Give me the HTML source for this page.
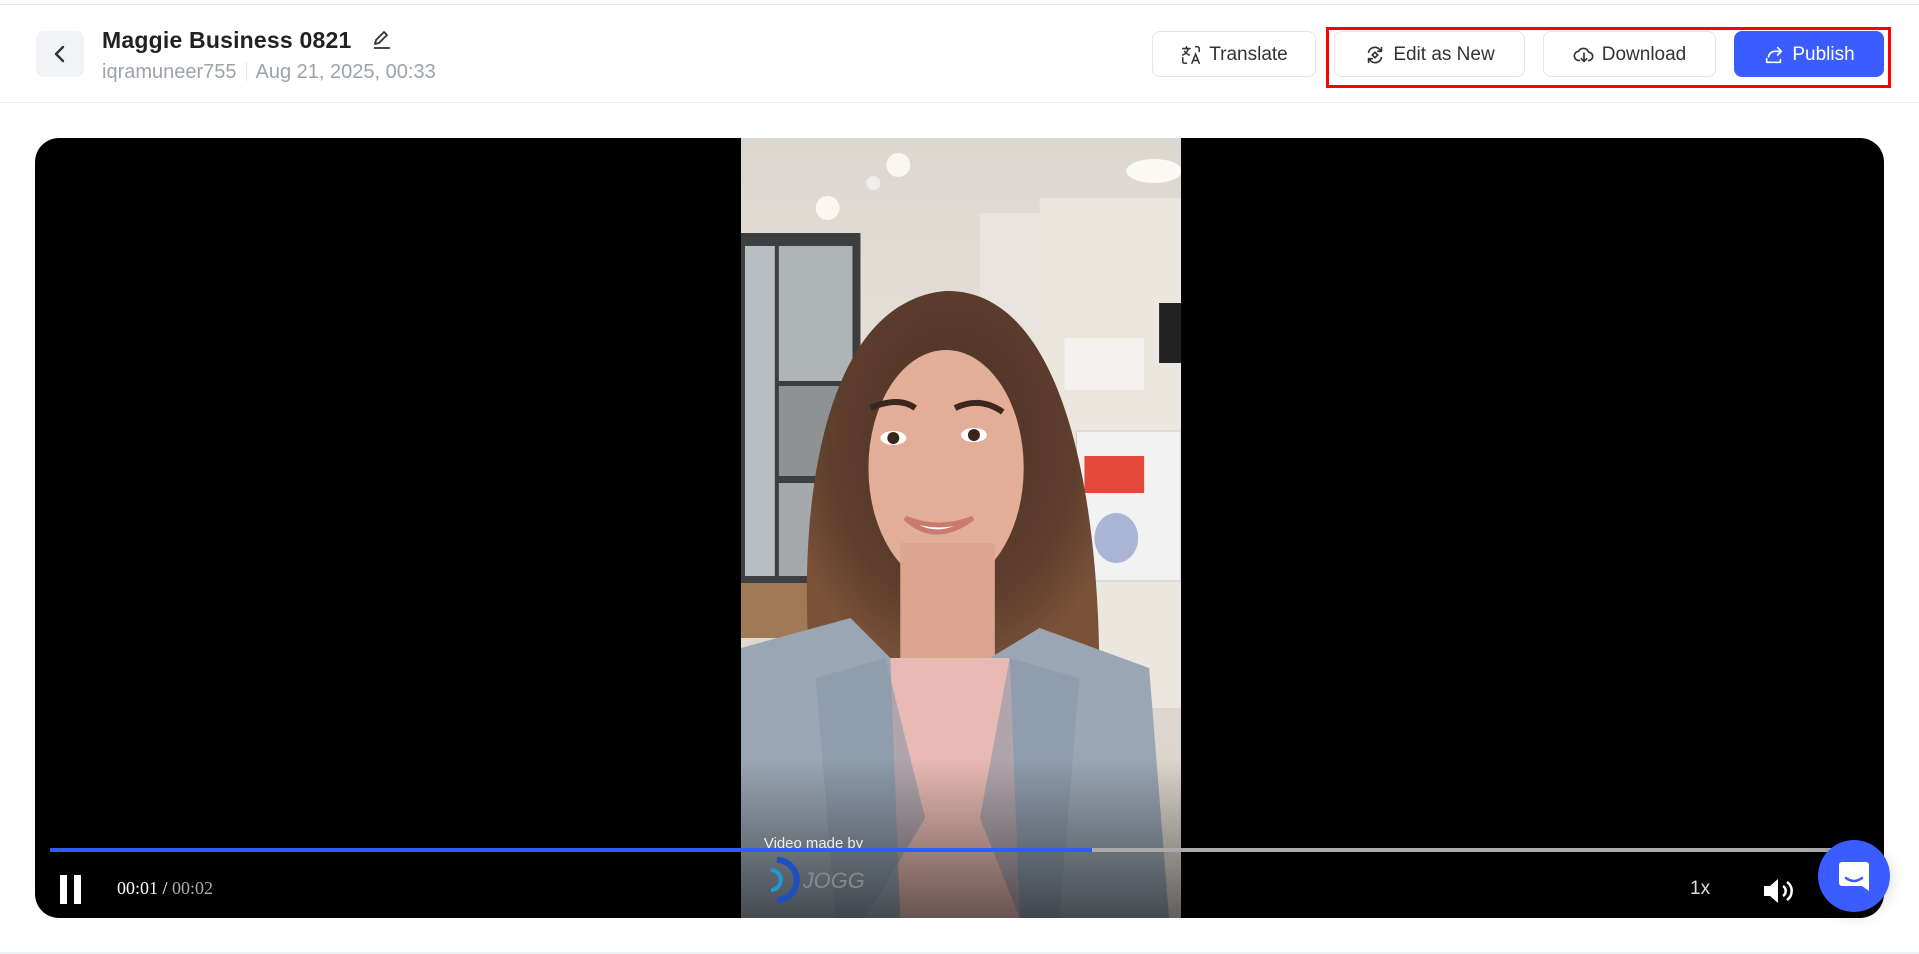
<!DOCTYPE html>
<html><head><meta charset="utf-8"><style>
*{box-sizing:border-box;margin:0;padding:0}
body{width:1919px;height:954px;background:#fff;font-family:"Liberation Sans",sans-serif;position:relative;overflow:hidden;color:#222}
.topline{position:absolute;left:0;top:4px;width:1919px;height:1px;background:#f6dde6}
.hline{position:absolute;left:0;top:102px;width:1919px;height:1px;background:#eceef0}
.back{position:absolute;left:36px;top:31px;width:48px;height:46px;background:#f1f3f6;border-radius:8px}
.title{position:absolute;left:102px;top:27px;font-size:23px;font-weight:bold;color:#222;letter-spacing:.2px}
.sub{position:absolute;left:102px;top:61px;font-size:20px;color:#9ea3a9}
.sub span{display:inline-block;width:1px;height:19px;background:#e2e4e7;vertical-align:-3px;margin:0 9px}
.btn{position:absolute;top:31px;height:46px;border:1px solid #e3e5e8;border-radius:8px;background:#fff;font-size:19px;color:#333;display:flex;align-items:center;justify-content:center;gap:7px;padding-top:2px}
.btn svg{width:22px;height:22px}
.pub{background:#3b5cff;color:#fff;border-color:#3b5cff}
.red{position:absolute;left:1326px;top:27px;width:565px;height:61px;border:3px solid #f00}
.video{position:absolute;left:35px;top:138px;width:1849px;height:780px;background:#000;border-radius:24px;overflow:hidden}
.bar{position:absolute;left:15px;top:710px;width:1782px;height:4px;background:#aaa}
.bar i{position:absolute;left:0;top:0;height:4px;width:1042px;background:#2f5bff}
.time{position:absolute;left:82px;top:740px;font-family:"Liberation Serif",serif;font-size:18px;color:#fff}
.time b{font-weight:normal;color:#aaa}
.chat{position:absolute;left:1818px;top:840px;width:72px;height:72px;border-radius:50%;background:#3b5cff;box-shadow:0 4px 16px rgba(0,0,0,.15)}
.bline{position:absolute;left:0;top:952px;width:1919px;height:2px;background:#eef0f3}
</style></head><body>
<div class="topline"></div>
<div class="back"><svg width="48" height="46" viewBox="0 0 48 46"><path d="M27 16l-7 7 7 7" fill="none" stroke="#333" stroke-width="2.4" stroke-linecap="round" stroke-linejoin="round"/></svg></div>
<div class="title">Maggie Business 0821 <svg width="24" height="24" viewBox="0 0 24 24" style="vertical-align:-3px;margin-left:12px"><path d="M5 17l1-4 8-8 3 3-8 8z M4 21h16" fill="none" stroke="#333" stroke-width="1.8" stroke-linejoin="round"/></svg></div>
<div class="sub">iqramuneer755<span></span>Aug 21, 2025, 00:33</div>

<div class="btn" style="left:1152px;width:164px"><svg viewBox="0 0 24 24" fill="none" stroke="#333" stroke-width="1.7" stroke-linecap="round"><path d="M3 5h8M7 3v2M9 5c-1 4-3 6-6 7M5 8c1 2 3 3 5 4M3 15v4a2 2 0 0 0 2 2h2M13 21l4-10 4 10M14.5 18h5M17 3h2a2 2 0 0 1 2 2v3"/></svg>Translate</div>
<div class="btn" style="left:1334px;width:191px"><svg viewBox="0 0 24 24" fill="none" stroke="#333" stroke-width="1.8" stroke-linecap="round"><path d="M5 9a7 7 0 0 1 12-3l2 2M19 15a7 7 0 0 1-12 3l-2-2M19 4v4h-4M5 20v-4h4"/><path d="M12 9l3 3-3 3-3-3z"/></svg>Edit as New</div>
<div class="btn" style="left:1543px;width:173px"><svg viewBox="0 0 24 24" fill="none" stroke="#333" stroke-width="1.8" stroke-linecap="round" stroke-linejoin="round"><path d="M7 18a5 5 0 0 1-1-10 6 6 0 0 1 11 1 4.5 4.5 0 0 1 0 9M12 10v9M9 16l3 3 3-3"/></svg>Download</div>
<div class="btn pub" style="left:1734px;width:150px"><svg viewBox="0 0 24 24" fill="none" stroke="#fff" stroke-width="1.8" stroke-linecap="round" stroke-linejoin="round"><path d="M4 20v-4M4 20h15v-3M6 14a7 7 0 0 1 7-6h6M16 4l4 4-4 4"/></svg>Publish</div>
<div class="red"></div>

<div class="video">
<svg style="position:absolute;left:706px;top:0" width="440" height="780" viewBox="0 0 442 780" preserveAspectRatio="none">
<defs>
<linearGradient id="bg" x1="0" y1="0" x2="0" y2="1"><stop offset="0" stop-color="#dcd7d0"/><stop offset=".25" stop-color="#e4ded6"/><stop offset="1" stop-color="#d8d2ca"/></linearGradient>
<linearGradient id="fade" x1="0" y1="0" x2="0" y2="1"><stop offset="0" stop-color="#000" stop-opacity="0"/><stop offset="1" stop-color="#000" stop-opacity=".55"/></linearGradient>
<radialGradient id="hair" cx=".5" cy=".35" r=".6"><stop offset="0" stop-color="#4a3026"/><stop offset=".7" stop-color="#5e3e2d"/><stop offset="1" stop-color="#7a5238"/></radialGradient>
</defs>
<rect width="442" height="780" fill="url(#bg)"/>
<rect x="0" y="95" width="120" height="350" fill="#3d3e40"/>
<rect x="4" y="108" width="30" height="330" fill="#b9bec2"/>
<rect x="38" y="108" width="74" height="135" fill="#aeb3b6"/>
<rect x="38" y="248" width="74" height="90" fill="#8e9294"/>
<rect x="38" y="345" width="74" height="93" fill="#a5a8aa"/>
<rect x="0" y="445" width="80" height="55" fill="#a07a55"/>
<rect x="240" y="75" width="60" height="450" fill="#e8e3dc"/>
<rect x="300" y="60" width="142" height="510" fill="#ebe6de"/>
<rect x="337" y="293" width="105" height="150" fill="#f2f2f3" stroke="#ccc"/>
<rect x="345" y="318" width="60" height="37" fill="#e34a3c"/>
<ellipse cx="377" cy="400" rx="22" ry="25" fill="#a9b5d2"/>
<rect x="420" y="165" width="22" height="60" fill="#222"/>
<rect x="325" y="200" width="80" height="52" fill="#f4f2ee"/>
<circle cx="87" cy="70" r="12" fill="#faf7f0"/><circle cx="158" cy="27" r="12" fill="#faf7f0"/><circle cx="133" cy="45" r="7" fill="#eee"/>
<ellipse cx="415" cy="33" rx="28" ry="12" fill="#fbf9f4"/>
<path d="M70 540C55 375 80 165 205 153 320 150 360 345 360 540 330 570 90 570 70 540z" fill="url(#hair)"/>
<ellipse cx="206" cy="330" rx="78" ry="118" fill="#e3ae98"/>
<rect x="160" y="405" width="95" height="130" fill="#dca58f"/>
<path d="M130 270q28-12 45 0M215 270q25-12 48 4" stroke="#3b2720" stroke-width="6" fill="none"/>
<ellipse cx="153" cy="300" rx="13" ry="7" fill="#fff"/><circle cx="153" cy="300" r="6" fill="#3b2418"/>
<ellipse cx="234" cy="297" rx="13" ry="7" fill="#fff"/><circle cx="234" cy="297" r="6" fill="#3b2418"/>
<path d="M165 380q30 28 68 0q-34 14-68 0z" fill="#fff" stroke="#c97b72" stroke-width="5"/>
<path d="M0 510L110 480 150 520 200 600 250 520 300 490 410 530 430 780 0 780z" fill="#9aa6b3"/>
<path d="M150 520h120l10 260H160z" fill="#e8bab3"/>
<path d="M75 540l70-20 40 160-60 100H95z M340 540l-70-20-30 160 40 100h40z" fill="#8b98a6" opacity=".6"/>
<rect y="620" width="442" height="160" fill="url(#fade)"/>
<text x="23" y="710" font-family="Liberation Sans,sans-serif" font-size="15" fill="#eee">Video made by</text>
<path d="M36 722a20 20 0 0 1 0 40" stroke="#1c4fc0" stroke-width="6" fill="none"/>
<path d="M30 732a10 10 0 0 1 0 20" stroke="#1b9ad6" stroke-width="4" fill="none"/>
<text x="62" y="750" font-family="Liberation Sans,sans-serif" font-size="22" font-style="italic" fill="#888">JOGG</text>
</svg>
<div class="bar"><i></i></div>
<div style="position:absolute;left:25px;top:737px;width:7px;height:29px;background:#fff"></div>
<div style="position:absolute;left:39px;top:737px;width:7px;height:29px;background:#fff"></div>
<div class="time">00:01 / <b>00:02</b></div>
<div style="position:absolute;left:1655px;top:740px;font-size:19px;color:#ddd">1x</div>
<svg style="position:absolute;left:1727px;top:738px" width="34" height="30" viewBox="0 0 34 30"><path d="M2 10h6l8-7v24l-8-7H2z" fill="#fff"/><path d="M21 10a6 6 0 0 1 0 10M25 6a11 11 0 0 1 0 18" stroke="#fff" stroke-width="2.5" fill="none"/></svg>
</div>
<div class="chat"><svg width="72" height="72" viewBox="0 0 72 72"><path d="M24 22h24a3 3 0 0 1 3 3v26l-7-5H24a3 3 0 0 1-3-3V25a3 3 0 0 1 3-3z" fill="#fff"/><path d="M28 38q8 6 16 0" stroke="#3b5cff" stroke-width="2.5" fill="none" stroke-linecap="round"/></svg></div>
<div class="hline"></div>
<div class="bline"></div>
</body></html>
